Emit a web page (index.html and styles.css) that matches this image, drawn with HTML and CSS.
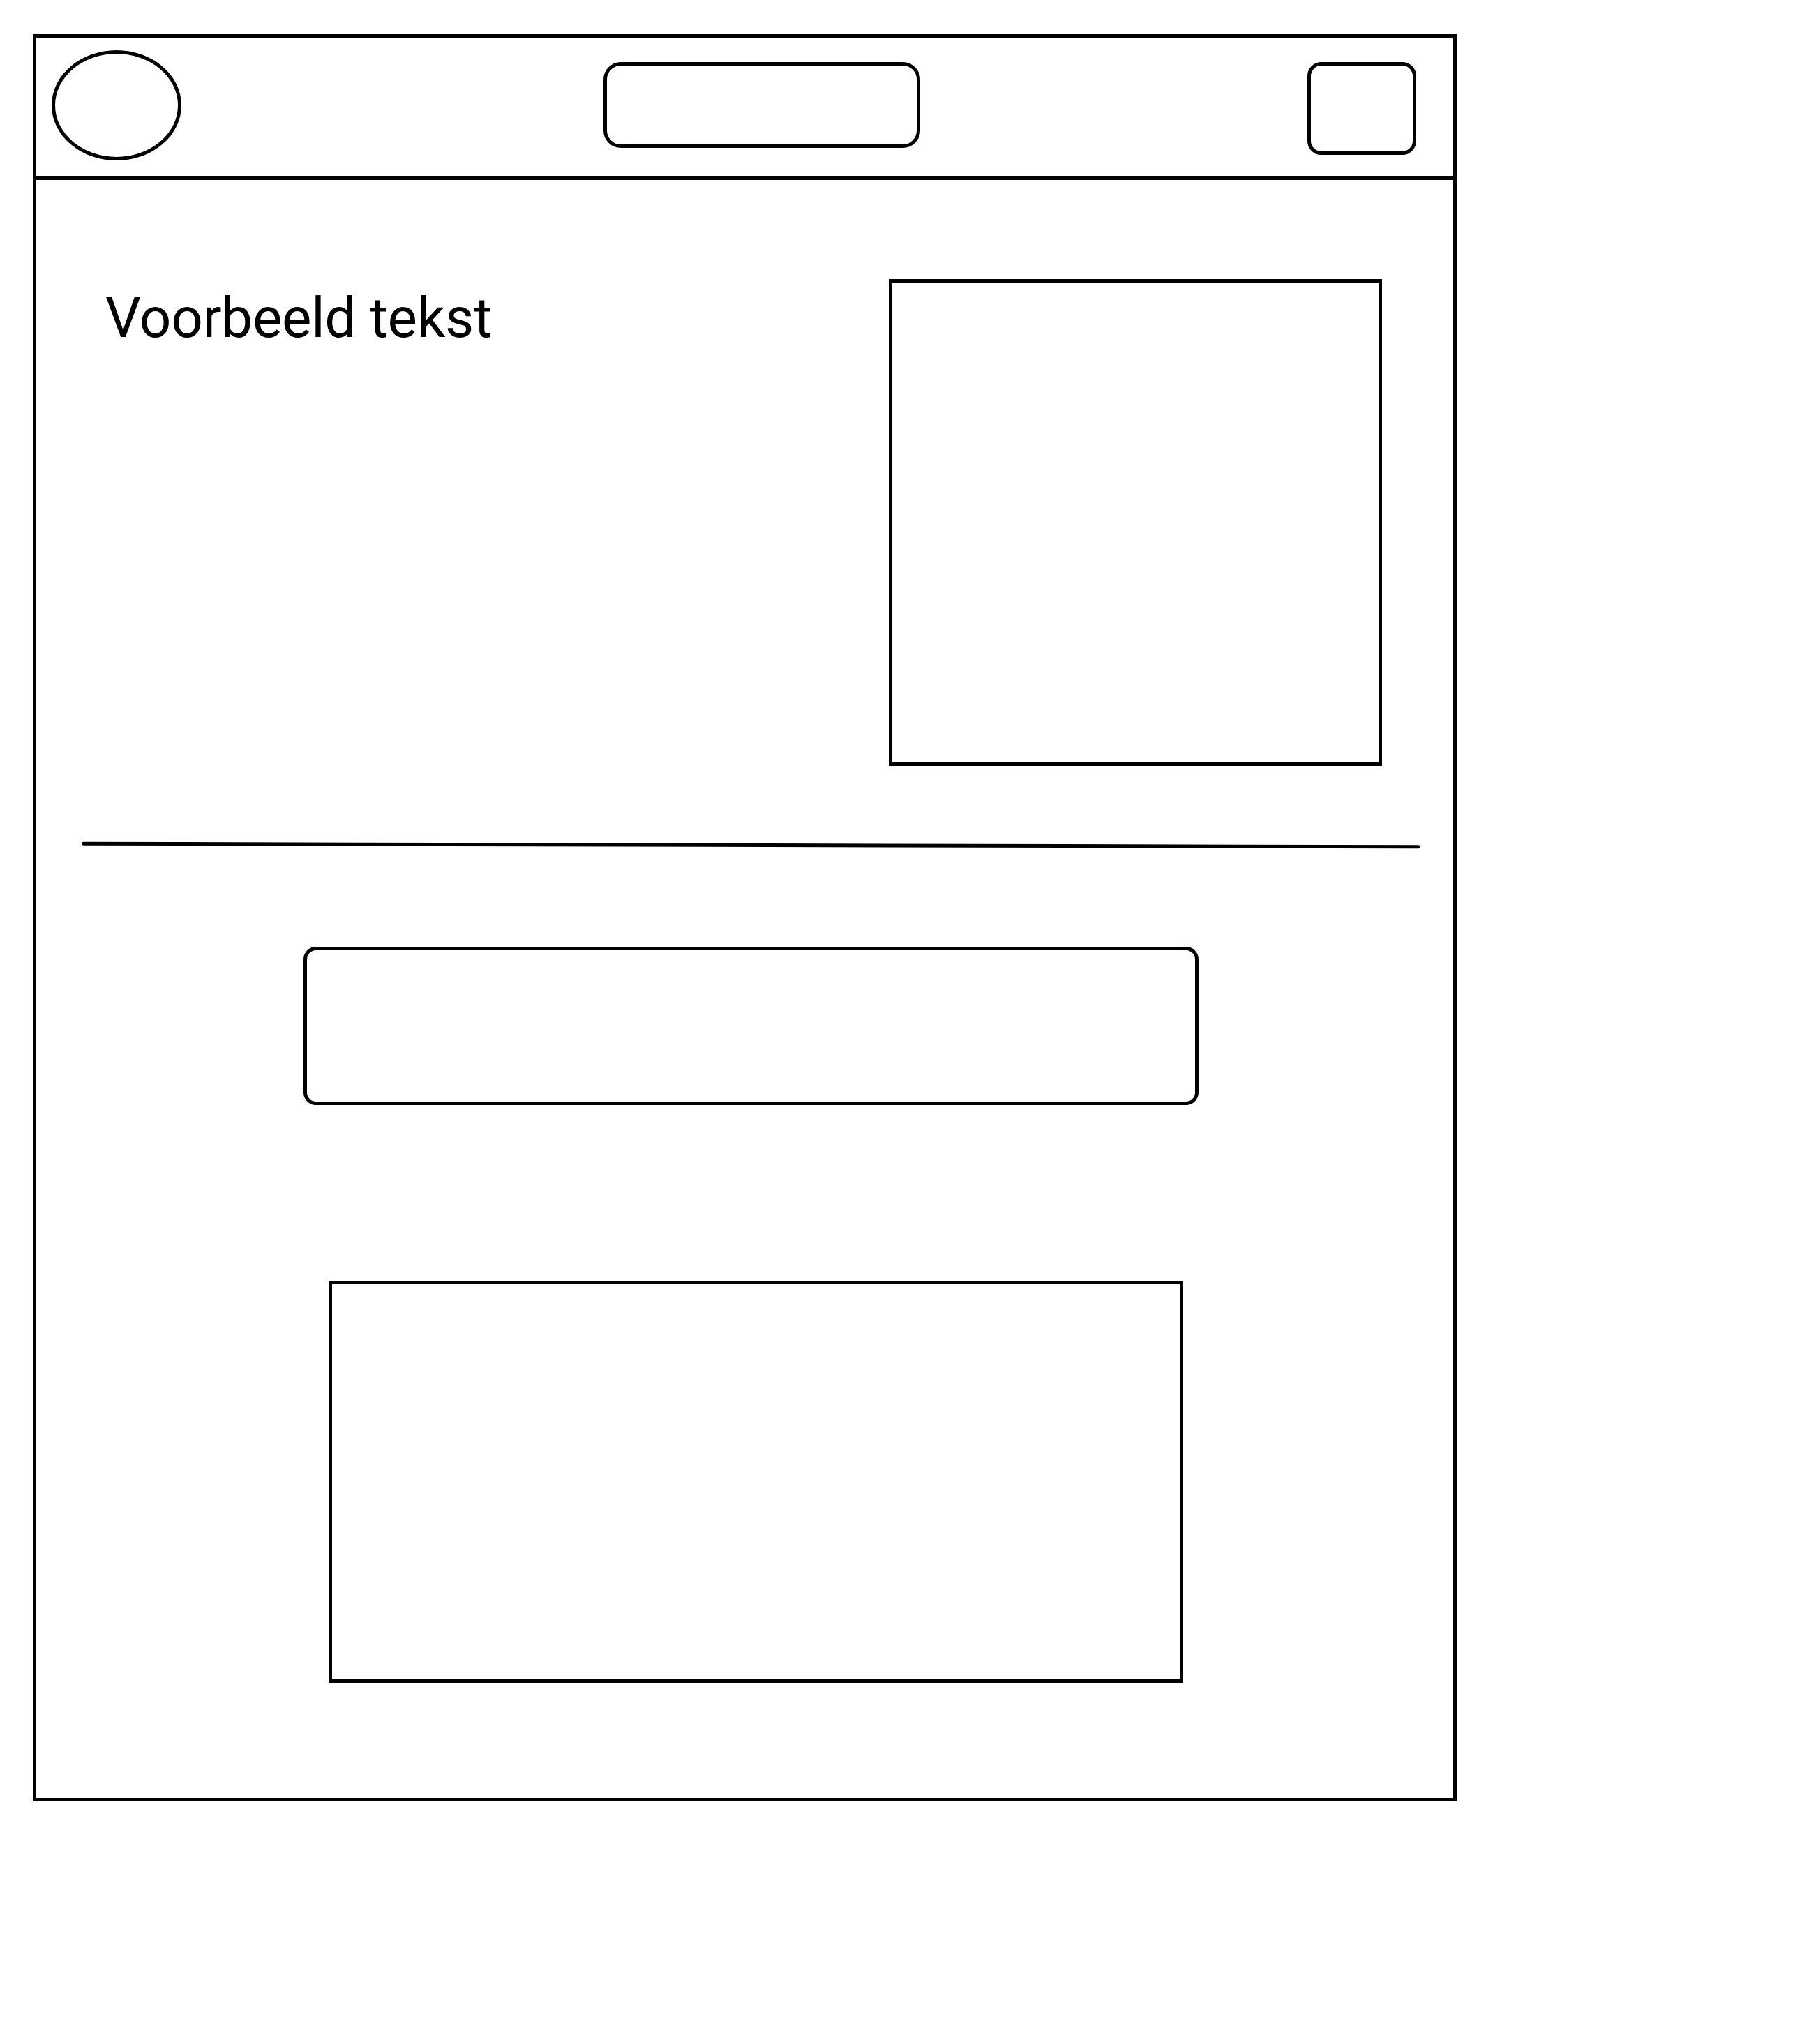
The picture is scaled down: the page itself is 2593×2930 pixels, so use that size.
FILE: index.html
```html
<!DOCTYPE html>
<html lang="nl">
<head>
    <meta charset="UTF-8">
    <title>Wireframe</title>
    <link rel="stylesheet" href="styles.css">
</head>
<body>
<div class="frame">
    <div class="topbar">
        <div class="logo"></div>
        <div class="search"></div>
        <div class="menu-btn"></div>
    </div>

    <div class="hero">
        <h1 class="hero-title">Voorbeeld tekst</h1>
        <div class="hero-image"></div>
    </div>

    <div class="divider"></div>

    <div class="input-box"></div>

    <div class="content-box"></div>
</div>
</body>
</html>
```

FILE: styles.css
```css
body { margin: 0; background-color: #fff; font-family: Roboto, "Liberation Sans", sans-serif; color: #000; }
.frame { margin: 49px 0 0 47px; width: 2041px; height: 2533px; border: 5px solid #000; box-sizing: border-box; }
.topbar { display: flex; align-items: flex-start; height: 204px; border-bottom: 5px solid #000; box-sizing: border-box; }
.logo { width: 186px; height: 158px; margin: 18px 0 0 22px; border: 5px solid #000; border-radius: 50%; box-sizing: border-box; }
.search { width: 454px; height: 123px; margin: 35px 0 0 605px; border: 5px solid #000; border-radius: 25px; box-sizing: border-box; }
.menu-btn { width: 156px; height: 133px; margin: 35px 0 0 555px; border: 5px solid #000; border-radius: 20px; box-sizing: border-box; }
.hero { display: flex; align-items: flex-start; padding: 142px 102px 0 99px; }
.hero-title { margin: 8px 0 0 0; font-size: 80px; font-weight: 400; line-height: 96px; letter-spacing: -0.3px; }
.hero-image { width: 707px; height: 698px; margin-left: auto; border: 5px solid #000; box-sizing: border-box; }
.divider { width: 1919px; height: 5px; margin: 111px 0 0 65px; background-color: #000; border-radius: 3px; transform: rotate(0.134deg); }
.input-box { width: 1283px; height: 227px; margin: 143px 0 0 383px; border: 5px solid #000; border-radius: 18px; box-sizing: border-box; }
.content-box { width: 1225px; height: 576px; margin: 252px 0 0 419px; border: 5px solid #000; box-sizing: border-box; }
```
